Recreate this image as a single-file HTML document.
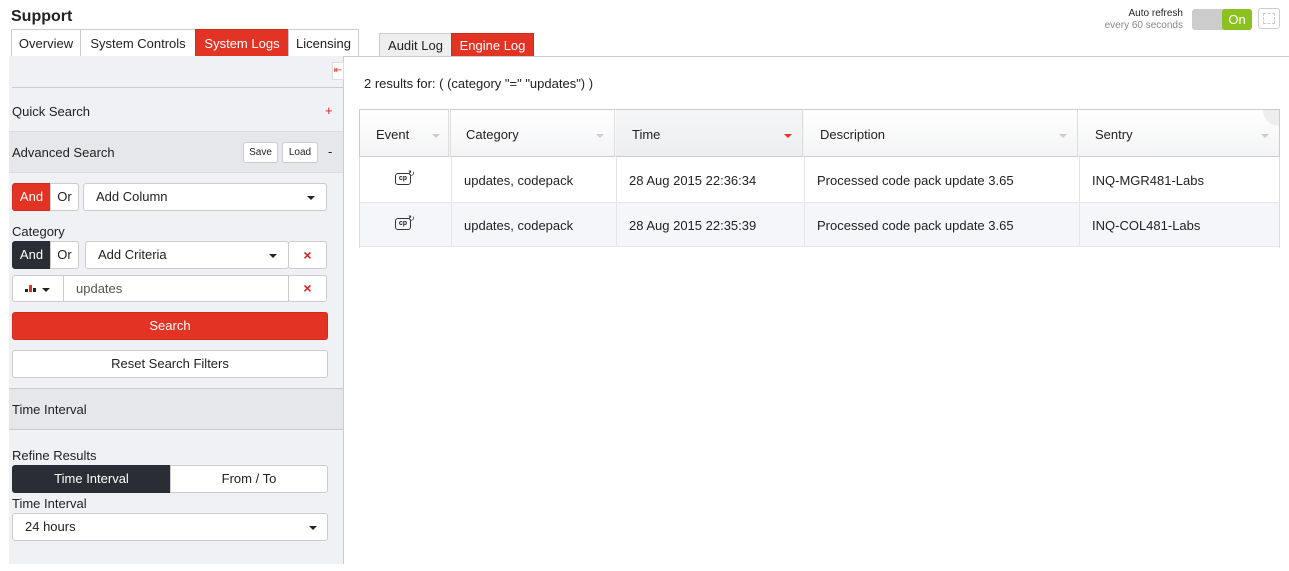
<!DOCTYPE html>
<html><head><meta charset="utf-8"><style>
*{box-sizing:border-box;margin:0;padding:0}
body{width:1289px;height:571px;background:#fff;font-family:"Liberation Sans",sans-serif;font-size:13px;color:#222;position:relative;overflow:hidden}
.a{position:absolute}
.tab{position:absolute;top:29px;height:28px;border:1px solid #ccc;border-bottom:none;background:#fff;line-height:27px;text-align:center;font-size:13px}
.btn{position:absolute;border:1px solid #ccc;border-radius:3px;background:#fff;text-align:center}
.red{background:#e23324 !important;color:#fff !important;border-color:#d22a1c !important}
.dd{position:absolute;border:1px solid #ccc;border-radius:3px;background:#fff;padding-left:12px}
.caret{position:absolute;width:0;height:0;border-left:4px solid transparent;border-right:4px solid transparent;border-top:4px solid #222}
.x{color:#d22;font-weight:bold;font-size:14px}
.th{position:absolute;top:109px;height:48px;line-height:49px;font-size:13px;background:linear-gradient(#fff,#f3f4f6);border-top:1px solid #ccc;border-bottom:1px solid #ccc}
.sc{position:absolute;width:0;height:0;border-left:4px solid transparent;border-right:4px solid transparent;border-top:4px solid #ccc;top:24px}
.td{position:absolute;font-size:13px}
</style></head><body>
<div class="a" style="left:11px;top:8px;font-size:16px;font-weight:bold">Support</div>
<div class="tab" style="left:11px;width:70px">Overview</div>
<div class="tab" style="left:80px;width:116px">System Controls</div>
<div class="tab red" style="left:195px;width:94px">System Logs</div>
<div class="tab" style="left:288px;width:71px">Licensing</div>
<div class="tab" style="left:379px;top:33px;height:24px;line-height:23px;width:73px;background:#eee">Audit Log</div>
<div class="tab red" style="left:451px;top:33px;height:24px;line-height:23px;width:83px">Engine Log</div>
<div class="a" style="left:343px;top:56px;width:946px;height:1px;background:#ccc"></div>

<div class="a" style="right:106px;top:8px;font-size:10px;text-align:right;line-height:12px">Auto refresh<br><span style="color:#888">every 60 seconds</span></div>
<div class="a" style="left:1192px;top:9px;width:60px;height:21px;background:#ccc;border-radius:3px"></div>
<div class="a" style="left:1222px;top:9px;width:30px;height:21px;background:#8cc21f;border-radius:3px;color:#fff;text-align:center;line-height:21px;font-size:13px">On</div>
<div class="a" style="left:1258px;top:8px;width:22px;height:21px;border:1px solid #ccc;border-radius:3px"></div>
<div class="a" style="left:1263px;top:13px;width:12px;height:11px;border:1px dashed #ccc"></div>

<div class="a" style="left:9px;top:56px;width:335px;height:508px;background:#f0f1f4;border-right:1px solid #ccc"></div>
<div class="a" style="left:332px;top:62px;width:12px;height:18px;background:#fff;border:1px solid #ddd;color:#e23324;font-size:10px;line-height:16px;text-align:center">⇤</div>
<div class="a" style="left:12px;top:87px;width:331px;height:1px;background:#ccc"></div>
<div class="a" style="left:12px;top:104px">Quick Search</div>
<div class="a" style="left:325px;top:103px;color:#d22">+</div>
<div class="a" style="left:9px;top:131px;width:334px;height:42px;background:#e6e7ea;border-top:1px solid #ddd;border-bottom:1px solid #ddd"></div>
<div class="a" style="left:12px;top:145px">Advanced Search</div>
<div class="btn" style="left:243px;top:142px;width:35px;height:21px;font-size:10px;line-height:19px">Save</div>
<div class="btn" style="left:282px;top:142px;width:36px;height:21px;font-size:10px;line-height:19px">Load</div>
<div class="a" style="left:328px;top:144px">-</div>

<div class="btn red" style="left:12px;top:183px;width:39px;height:28px;line-height:26px;border-radius:3px 0 0 3px">And</div>
<div class="btn" style="left:50px;top:183px;width:29px;height:28px;line-height:26px;border-radius:0 3px 3px 0">Or</div>
<div class="dd" style="left:83px;top:183px;width:244px;height:28px;line-height:26px">Add Column<span class="caret" style="right:11px;top:12px"></span></div>
<div class="a" style="left:12px;top:224px">Category</div>
<div class="btn" style="left:12px;top:241px;width:39px;height:28px;line-height:26px;background:#2a2d33;color:#fff;border-color:#2a2d33;border-radius:3px 0 0 3px">And</div>
<div class="btn" style="left:50px;top:241px;width:29px;height:28px;line-height:26px;border-radius:0 3px 3px 0">Or</div>
<div class="dd" style="left:85px;top:241px;width:204px;height:28px;line-height:26px">Add Criteria<span class="caret" style="right:11px;top:12px"></span></div>
<div class="btn x" style="left:288px;top:241px;width:39px;height:28px;line-height:26px">×</div>
<div class="btn" style="left:12px;top:275px;width:52px;height:27px;border-radius:3px 0 0 3px"></div>
<div class="a" style="left:25px;top:289px;width:3px;height:3px;background:#222"></div>
<div class="a" style="left:29px;top:285px;width:3px;height:7px;background:#e23324"></div>
<div class="a" style="left:33px;top:288px;width:3px;height:4px;background:#222"></div>
<span class="caret" style="left:42px;top:288px"></span>
<div class="a" style="left:63px;top:275px;width:226px;height:27px;background:#fff;border:1px solid #ccc;padding-left:12px;line-height:25px;color:#555">updates</div>
<div class="btn x" style="left:288px;top:275px;width:39px;height:27px;line-height:25px">×</div>
<div class="btn red" style="left:12px;top:312px;width:316px;height:28px;line-height:26px;border-radius:3px">Search</div>
<div class="btn" style="left:12px;top:350px;width:316px;height:28px;line-height:26px">Reset Search Filters</div>
<div class="a" style="left:9px;top:388px;width:334px;height:42px;background:#e6e7ea;border-top:1px solid #ccc;border-bottom:1px solid #ccc"></div>
<div class="a" style="left:12px;top:402px">Time Interval</div>
<div class="a" style="left:12px;top:448px">Refine Results</div>
<div class="btn" style="left:12px;top:465px;width:159px;height:28px;line-height:26px;background:#2a2d33;color:#fff;border-color:#2a2d33;border-radius:3px 0 0 3px">Time Interval</div>
<div class="btn" style="left:170px;top:465px;width:158px;height:28px;line-height:26px;border-radius:0 3px 3px 0">From / To</div>
<div class="a" style="left:12px;top:496px">Time Interval</div>
<div class="dd" style="left:12px;top:513px;width:316px;height:28px;line-height:26px">24 hours<span class="caret" style="right:10px;top:12px"></span></div>

<div class="a" style="left:364px;top:76px">2 results for: ( (category "=" "updates") )</div>
<div class="a" style="left:359px;top:109px;width:921px;height:139px;border-left:1px solid #ddd;border-right:1px solid #ddd"></div>
<div class="th" style="left:359px;width:92px;padding-left:16px;border-left:1px solid #ccc;border-right:3px double #ddd">Event<span class="sc" style="right:8px"></span></div>
<div class="th" style="left:451px;width:166px;padding-left:15px;border-right:3px double #ddd">Category<span class="sc" style="right:10px"></span></div>
<div class="th" style="left:616px;width:189px;padding-left:16px;background:linear-gradient(#f6f6f7,#eceef0);border-right:3px double #ddd">Time<span class="sc" style="right:10px;border-top-color:#e23324"></span></div>
<div class="th" style="left:804px;width:276px;padding-left:16px;border-right:3px double #ddd">Description<span class="sc" style="right:10px"></span></div>
<div class="th" style="left:1079px;width:201px;padding-left:16px;border-right:1px solid #ccc">Sentry<span class="sc" style="right:10px"></span></div>
<div class="a" style="left:1263px;top:110px;width:16px;height:16px;border-radius:0 0 0 16px;background:#eee"></div>

<div class="a" style="left:360px;top:202px;width:919px;height:45px;background:#f5f6f9;border-top:1px solid #e6e6e6;border-bottom:1px solid #e6e6e6"></div>
<div class="a" style="left:451px;top:157px;width:1px;height:90px;background:#e6e6e6"></div>
<div class="a" style="left:616px;top:157px;width:1px;height:90px;background:#e6e6e6"></div>
<div class="a" style="left:804px;top:157px;width:1px;height:90px;background:#e6e6e6"></div>
<div class="a" style="left:1079px;top:157px;width:1px;height:90px;background:#e6e6e6"></div>

<div class="a" style="left:395px;top:173px;width:16px;height:12px;border:1.5px solid #333;border-radius:3px;font-size:7px;line-height:9px;text-align:center;font-weight:bold">cp</div>
<div class="a" style="left:408px;top:169px;font-size:8px">↻</div>
<div class="a" style="left:395px;top:218px;width:16px;height:12px;border:1.5px solid #333;border-radius:3px;font-size:7px;line-height:9px;text-align:center;font-weight:bold">cp</div>
<div class="a" style="left:408px;top:214px;font-size:8px">↻</div>

<div class="td" style="left:464px;top:173px">updates, codepack</div>
<div class="td" style="left:629px;top:173px">28 Aug 2015 22:36:34</div>
<div class="td" style="left:817px;top:173px">Processed code pack update 3.65</div>
<div class="td" style="left:1092px;top:173px">INQ-MGR481-Labs</div>
<div class="td" style="left:464px;top:218px">updates, codepack</div>
<div class="td" style="left:629px;top:218px">28 Aug 2015 22:35:39</div>
<div class="td" style="left:817px;top:218px">Processed code pack update 3.65</div>
<div class="td" style="left:1092px;top:218px">INQ-COL481-Labs</div>
</body></html>
